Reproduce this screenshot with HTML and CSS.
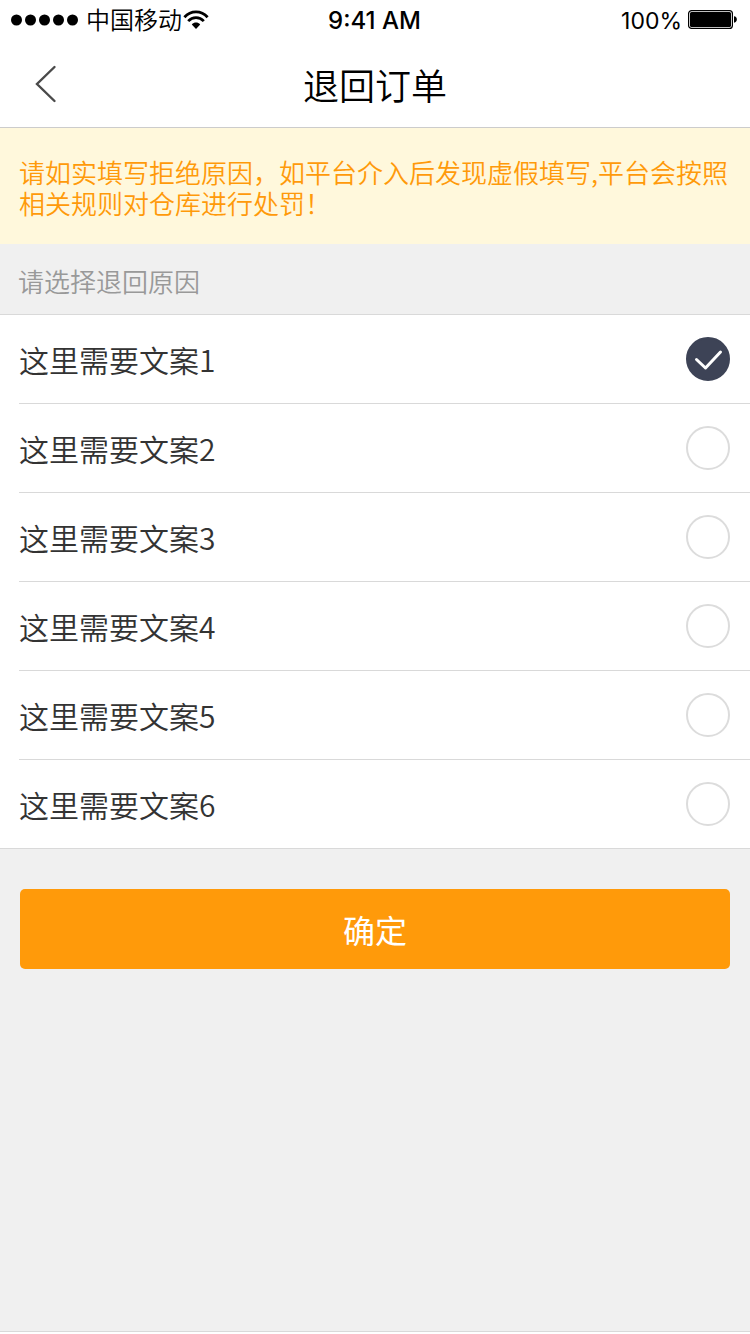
FILE: index.html
```html
<!DOCTYPE html>
<html lang="zh-CN">
<head>
  <meta charset="utf-8">
  <meta name="viewport" content="width=device-width, initial-scale=1">
  <title>退回订单</title>
  <link rel="stylesheet" href="styles.css">
</head>
<body>
  <div class="status-bar">
    <div class="carrier">
      <svg class="signal" viewBox="0 0 68 12" aria-hidden="true"><circle cx="5.5" cy="6" r="5.5"/><circle cx="19.5" cy="6" r="5.5"/><circle cx="33.5" cy="6" r="5.5"/><circle cx="47.5" cy="6" r="5.5"/><circle cx="61.5" cy="6" r="5.5"/></svg>
      <span class="carrier-name">中国移动</span>
      <svg class="wifi" viewBox="0 0 26 20" aria-hidden="true">
        <path d="M1.4 7.2C7.8.2 18.2.2 24.6 7.2M5.2 11.1c4.4-4.6 11.2-4.6 15.6 0" fill="none" stroke="currentColor" stroke-width="2.8"/>
        <path d="M8.8 14.4c2.4-2.4 6-2.4 8.4 0L13 19z"/>
      </svg>
    </div>
    <div class="clock">9:41 AM</div>
    <div class="power">
      <span>100%</span>
      <svg class="battery" viewBox="0 0 50 20" aria-hidden="true"><rect x=".6" y=".6" width="43.8" height="17.8" rx="3" fill="none" stroke="currentColor" stroke-width="1.2"/><rect x="2" y="2" width="41" height="15" rx="1.5"/><path d="M46 6.3c3.8.3 3.8 6.1 0 6.4z"/></svg>
    </div>
  </div>

  <header class="nav-bar">
    <button class="back" type="button" aria-label="返回">
      <svg viewBox="0 0 24 40" aria-hidden="true"><path d="M20.5 3 3 20l17.5 17" fill="none" stroke="currentColor" stroke-width="2.4" stroke-linecap="round"/></svg>
    </button>
    <h1 class="title">退回订单</h1>
  </header>

  <main class="content">
    <p class="notice">请如实填写拒绝原因，如平台介入后发现虚假填写,平台会按照相关规则对仓库进行处罚！</p>
    <form>
      <fieldset class="reasons">
        <legend class="section-title">请选择退回原因</legend>
        <div class="options">
          <label class="option"><span>这里需要文案1</span><span class="choice"><input type="radio" name="reason" value="1" checked><svg class="tick" viewBox="0 0 44 44" aria-hidden="true"><path d="m10.5 22.5 9 8.5 15-16"/></svg></span></label>
          <label class="option"><span>这里需要文案2</span><span class="choice"><input type="radio" name="reason" value="2"><svg class="tick" viewBox="0 0 44 44" aria-hidden="true"><path d="m10.5 22.5 9 8.5 15-16"/></svg></span></label>
          <label class="option"><span>这里需要文案3</span><span class="choice"><input type="radio" name="reason" value="3"><svg class="tick" viewBox="0 0 44 44" aria-hidden="true"><path d="m10.5 22.5 9 8.5 15-16"/></svg></span></label>
          <label class="option"><span>这里需要文案4</span><span class="choice"><input type="radio" name="reason" value="4"><svg class="tick" viewBox="0 0 44 44" aria-hidden="true"><path d="m10.5 22.5 9 8.5 15-16"/></svg></span></label>
          <label class="option"><span>这里需要文案5</span><span class="choice"><input type="radio" name="reason" value="5"><svg class="tick" viewBox="0 0 44 44" aria-hidden="true"><path d="m10.5 22.5 9 8.5 15-16"/></svg></span></label>
          <label class="option"><span>这里需要文案6</span><span class="choice"><input type="radio" name="reason" value="6"><svg class="tick" viewBox="0 0 44 44" aria-hidden="true"><path d="m10.5 22.5 9 8.5 15-16"/></svg></span></label>
        </div>
      </fieldset>
      <div class="actions">
        <button class="submit" type="submit">确定</button>
      </div>
    </form>
  </main>
</body>
</html>
```

FILE: styles.css
```css
* {
  box-sizing: border-box;
}

body {
  display: flex;
  flex-direction: column;
  min-height: 100vh;
  margin: 0;
  padding-bottom: 2px;
  background: #fff;
  color: #333;
  font-family: "Noto Sans CJK SC", "Liberation Sans", sans-serif;
  font-weight: 350;
}

svg {
  display: block;
  fill: currentColor;
}

.status-bar {
  display: grid;
  grid-template-columns: 1fr auto 1fr;
  align-items: center;
  height: 40px;
  padding: 0 12px 0 11px;
  color: #000;
  font-family: Inter, "Noto Sans CJK SC", sans-serif;
  font-size: 24px;
  line-height: 40px;
}

.carrier,
.power {
  display: flex;
  align-items: center;
}

.carrier-name {
  margin: 0 1px 0 7px;
  padding-top: 2px;
  line-height: 38px;
}

.signal {
  width: 68px;
  height: 12px;
}

.wifi {
  width: 26px;
  height: 20px;
}

.clock {
  padding-top: 2px;
  font-weight: 500;
  line-height: 38px;
}

.power {
  justify-content: flex-end;
  gap: 6px;
  font-size: 23px;
  font-weight: 400;
}

.power span {
  padding-top: 2px;
  line-height: 38px;
}

.battery {
  width: 50px;
  height: 20px;
}

.nav-bar {
  display: grid;
  grid-template-columns: 1fr auto 1fr;
  align-items: center;
  height: 88px;
  border-bottom: 1px solid #ccc;
}

.back {
  justify-self: start;
  padding: 0 34px;
  border: 0;
  background: none;
  color: #4a4a4a;
}

.back svg {
  width: 24px;
  height: 40px;
}

.title {
  margin: 0;
  color: #000;
  font-size: 36px;
  font-weight: 350;
  line-height: 48px;
}

.content {
  flex: 1;
  border-bottom: 1px solid #d9d9d9;
  background: #f0f0f0;
}

.notice {
  margin: 0;
  padding: 28px 20px 26px 19px;
  background: #fff8dc;
  color: #ff9a0a;
  font-size: 26px;
  line-height: 31px;
}

.reasons {
  min-width: 0;
  margin: 0;
  padding: 0;
  border: 0;
}

.section-title {
  padding: 4px 18px 0;
  color: #999;
  font-size: 26px;
  line-height: 66px;
}

.options {
  border-top: 1px solid #d9d9d9;
  border-bottom: 1px solid #d9d9d9;
  background: #fff;
}

.option {
  display: flex;
  align-items: center;
  justify-content: space-between;
  height: 89px;
  margin-left: 19px;
  padding-right: 20px;
  border-bottom: 1px solid #d9d9d9;
  font-size: 30px;
}

.option:last-child {
  height: 88px;
  border-bottom: 0;
}

.choice {
  display: grid;
}

.choice input,
.tick {
  grid-area: 1 / 1;
  width: 44px;
  height: 44px;
  margin: 0;
}

.choice input {
  appearance: none;
  border: 2px solid #dcdcdc;
  border-radius: 50%;
  background: #fff;
}

.choice input:checked {
  border-color: #3d4356;
  background: #3d4356;
}

.tick {
  visibility: hidden;
  fill: none;
  stroke: #fff;
  stroke-width: 3;
  stroke-linecap: round;
  stroke-linejoin: round;
  pointer-events: none;
}

.choice input:checked + .tick {
  visibility: visible;
}

.actions {
  padding: 40px 20px;
}

.submit {
  width: 100%;
  height: 80px;
  border: 0;
  border-radius: 5px;
  background: #ff9a0a;
  color: #fff;
  font-family: inherit;
  font-size: 32px;
  font-weight: 400;
}
```
